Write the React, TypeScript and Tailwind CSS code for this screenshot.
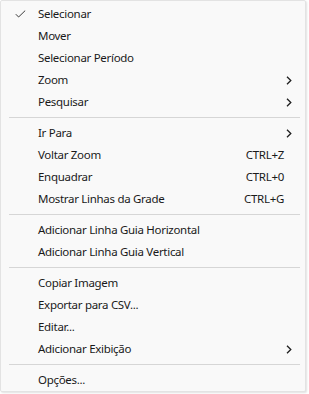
import { ReactNode } from 'react';

type Item =
  | { kind: 'item'; label: string; checked?: boolean; shortcut?: string; submenu?: boolean }
  | { kind: 'sep' };

const items: Item[] = [
  { kind: 'item', label: 'Selecionar', checked: true },
  { kind: 'item', label: 'Mover' },
  { kind: 'item', label: 'Selecionar Período' },
  { kind: 'item', label: 'Zoom', submenu: true },
  { kind: 'item', label: 'Pesquisar', submenu: true },
  { kind: 'sep' },
  { kind: 'item', label: 'Ir Para', submenu: true },
  { kind: 'item', label: 'Voltar Zoom', shortcut: 'CTRL+Z' },
  { kind: 'item', label: 'Enquadrar', shortcut: 'CTRL+0' },
  { kind: 'item', label: 'Mostrar Linhas da Grade', shortcut: 'CTRL+G' },
  { kind: 'sep' },
  { kind: 'item', label: 'Adicionar Linha Guia Horizontal' },
  { kind: 'item', label: 'Adicionar Linha Guia Vertical' },
  { kind: 'sep' },
  { kind: 'item', label: 'Copiar Imagem' },
  { kind: 'item', label: 'Exportar para CSV...' },
  { kind: 'item', label: 'Editar...' },
  { kind: 'item', label: 'Adicionar Exibição', submenu: true },
  { kind: 'sep' },
  { kind: 'item', label: 'Opções...' },
];

function Check() {
  return (
    <svg width="11" height="8" viewBox="0 0 11 8" fill="none">
      <path d="M0.8 4.2 L3.6 7 L10.2 0.6" stroke="#3a3a3a" strokeWidth="1" />
    </svg>
  );
}

function Chevron() {
  return (
    <svg width="6" height="9" viewBox="0 0 6 9" fill="none">
      <path d="M1 0.8 L4.8 4.5 L1 8.2" stroke="#1f1f1f" strokeWidth="1.3" />
    </svg>
  );
}

function Row({ children }: { children: ReactNode }) {
  return <div className="flex h-[22px] items-center">{children}</div>;
}

export default function App() {
  return (
    <div className="h-[394px] w-[309px] bg-white">
      <div
        className="h-[392px] w-[306px] rounded-[2px] border border-[#e3e3e3] bg-[#f9f9f9] py-[2px] text-[11.5px] tracking-[-0.3px] text-[#1a1a1a] shadow-[1px_1px_2px_rgba(0,0,0,0.12)]"
        style={{ fontFamily: '"Segoe UI", "Noto Sans", "Open Sans", sans-serif' }}
      >
        {items.map((it, i) =>
          it.kind === 'sep' ? (
            <div key={i} className="flex h-[9px] items-center pl-[8px] pr-[5px]">
              <div className="h-px w-full bg-[#d6d6d6]" />
            </div>
          ) : (
            <Row key={i}>
              <div className="flex w-[37px] justify-center pl-[1px]">
                {it.checked && <Check />}
              </div>
              <span className="flex-1 leading-none">{it.label}</span>
              {it.shortcut && <span className="mr-[21px] leading-none">{it.shortcut}</span>}
              {it.submenu && (
                <span className="mr-[13px] flex items-center">
                  <Chevron />
                </span>
              )}
            </Row>
          ),
        )}
      </div>
    </div>
  );
}
